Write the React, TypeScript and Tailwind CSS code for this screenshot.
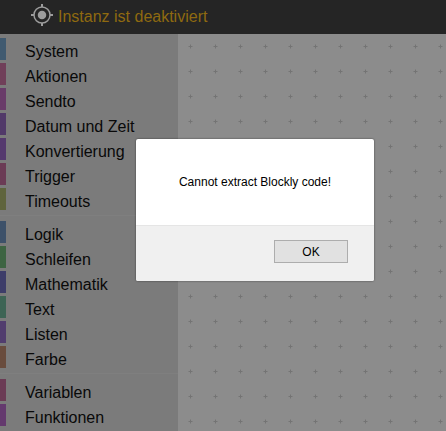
const groups = [
  [
    { name: "System", color: "#76a4cc" },
    { name: "Aktionen", color: "#cc74a2" },
    { name: "Sendto", color: "#bf6cbf" },
    { name: "Datum und Zeit", color: "#9468bf" },
    { name: "Konvertierung", color: "#9c68c8" },
    { name: "Trigger", color: "#c46c9c" },
    { name: "Timeouts", color: "#aeb670" },
  ],
  [
    { name: "Logik", color: "#7094bf" },
    { name: "Schleifen", color: "#70b678" },
    { name: "Mathematik", color: "#7070bf" },
    { name: "Text", color: "#70b69c" },
    { name: "Listen", color: "#9470c8" },
    { name: "Farbe", color: "#bf8a70" },
  ],
  [
    { name: "Variablen", color: "#c46c9c" },
    { name: "Funktionen", color: "#b668c8" },
  ],
];

function Crosshair() {
  return (
    <svg width="24" height="24" viewBox="0 0 24 24" fill="none" stroke="#9c9c9c" className="shrink-0">
      <circle cx="12" cy="12" r="8" strokeWidth="1.5" />
      <circle cx="12" cy="12" r="4.25" fill="#9c9c9c" stroke="none" />
      <path d="M12 1v3M12 20v3M1 12h3M20 12h3" strokeWidth="2" />
    </svg>
  );
}

export default function App() {
  return (
    <div className="relative h-[431px] w-[446px] overflow-hidden bg-white font-['Liberation_Sans',Arial,sans-serif]">
      <header className="flex h-[34px] items-center bg-[#252525] pb-[4px] pl-[30px]">
        <Crosshair />
        <span className="ml-[4px] mt-[4px] text-[16px] text-[#8f6a10]">Instanz ist deaktiviert</span>
      </header>

      <div className="flex h-[397px]">
        {/* Toolbox */}
        <aside className="w-[178px] shrink-0 bg-[#e0e0e0] pt-1">
          {groups.map((group, i) => (
            <div key={i}>
              {i > 0 && <div className="mt-[2px] mb-[5px] h-px bg-[#e8e8e8]" />}
              {group.map((item) => (
                <div key={item.name} className="flex h-[25px] text-[16px] leading-[28px] text-[#111]">
                  <span className="h-[22px] w-[6px]" style={{ backgroundColor: item.color }} />
                  <span className="pl-[19px]">{item.name}</span>
                </div>
              ))}
            </div>
          ))}
        </aside>

        {/* Workspace grid */}
        <main className="relative flex-1 bg-white">
          <svg className="absolute inset-0 h-full w-full">
            <defs>
              <pattern id="grid" x="0" y="0" width="25" height="25" patternUnits="userSpaceOnUse">
                <path d="M12.5 10.5v4M10.5 12.5h4" stroke="#d4d4d4" strokeWidth="1" />
              </pattern>
            </defs>
            <rect width="100%" height="100%" fill="url(#grid)" />
          </svg>
        </main>
      </div>

      {/* Modal */}
      <div className="absolute inset-x-0 bottom-0 top-[34px] bg-black/45" />
      <div className="absolute left-[136px] top-[139px] w-[238px] overflow-hidden rounded-[2px] bg-white shadow-[0_0_2px_rgba(0,0,0,0.6)]">
        <div className="flex h-[86px] items-center justify-center text-[12px] text-black">
          Cannot extract Blockly code!
        </div>
        <div className="flex h-[56px] items-start justify-end border-t border-[#e5e5e5] bg-[#f0f0f0] pr-[26px] pt-[14px]">
          <button className="h-[23px] w-[74px] border border-[#adadad] bg-[#e1e1e1] text-[12px] text-black">OK</button>
        </div>
      </div>
    </div>
  );
}
